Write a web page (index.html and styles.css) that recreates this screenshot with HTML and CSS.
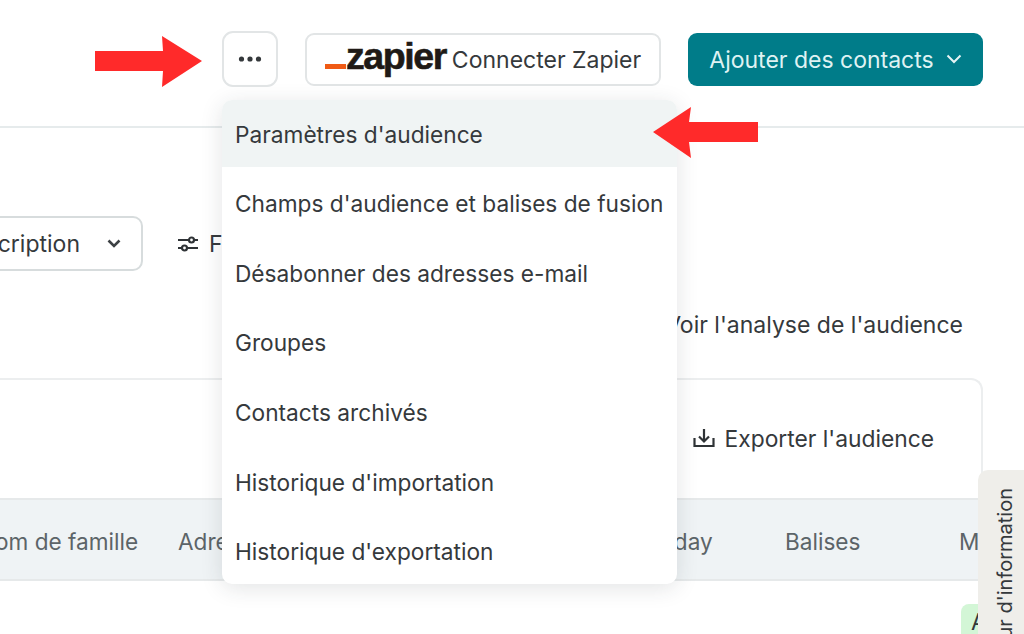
FILE: index.html
```html
<!DOCTYPE html>
<html lang="fr">
<head>
<meta charset="utf-8">
<title>Audience</title>
<link rel="stylesheet" href="styles.css">
</head>
<body>
<div class="page">
  <header class="topbar">
    <button class="btn btn-icon" aria-label="Plus">
      <svg width="24" height="6" viewBox="0 0 24 6"><circle cx="3.5" cy="3" r="2.6"/><circle cx="12" cy="3" r="2.6"/><circle cx="20.5" cy="3" r="2.6"/></svg>
    </button>
    <button class="btn btn-zapier"><span class="zap-mark"></span><span class="zap-word">zapier</span><span class="zap-label">Connecter Zapier</span></button>
    <button class="btn btn-primary"><span>Ajouter des contacts</span>
      <svg width="16" height="10" viewBox="0 0 16 10"><path d="M1.5 1.5 8 8l6.5-6.5" fill="none" stroke="#e6f4f5" stroke-width="2"/></svg>
    </button>
  </header>

  <section class="filters">
    <div class="select"><span class="select-text">Statut d'inscription</span>
      <svg class="select-chevron" width="14" height="9" viewBox="0 0 14 9"><path d="M1.5 1.5 7 7l5.5-5.5" fill="none" stroke="#3d4144" stroke-width="2.6"/></svg>
    </div>
    <div class="filter-link">
      <svg width="22" height="18" viewBox="0 0 22 18" fill="none" stroke="#2f3336" stroke-width="2.2"><path d="M1 5h11M17 5h4M1 13h4M10 13h11"/><circle cx="14.5" cy="5" r="2.5"/><circle cx="7.500" cy="13" r="2.5"/></svg>
      <span>Filtrer</span>
    </div>
  </section>

  <div class="analysis"><span>Voir l'analyse de l'audience</span></div>

  <section class="card">
    <div class="card-tools">
      <svg width="22" height="20" viewBox="0 0 22 20" fill="none" stroke="#2f3336" stroke-width="2.2"><path d="M1.500 10v8h19v-8M11 1v12M6 8.500l5 5 5-5"/></svg>
      <span>Exporter l'audience</span>
    </div>
    <div class="table-head">
      <span>Nom de famille</span>
      <span>Adresse e-mail</span>
      <span>Birthday</span>
      <span>Balises</span>
      <span>Membre</span>
    </div>
    <div class="table-row"><span class="badge">Abonné</span></div>
  </section>

  <nav class="menu">
    <a class="menu-item active">Paramètres d'audience</a>
    <a class="menu-item">Champs d'audience et balises de fusion</a>
    <a class="menu-item">Désabonner des adresses e-mail</a>
    <a class="menu-item">Groupes</a>
    <a class="menu-item">Contacts archivés</a>
    <a class="menu-item">Historique d'importation</a>
    <a class="menu-item">Historique d'exportation</a>
  </nav>

  <svg class="arrow arrow-right" width="108" height="52" viewBox="0 0 108 52"><path d="M0 15H68L67 0l40 25-40 26 1-16H0z"/></svg>
  <svg class="arrow arrow-left" width="108" height="52" viewBox="0 0 108 52"><path d="M0 25 38 0l-2 15h69v20H36l2 16z"/></svg>

  <aside class="feedback"><span>Retour d'information</span></aside>
</div>
</body>
</html>
```
FILE: styles.css
```css
* { box-sizing: border-box; }
html, body { margin: 0; padding: 0; }
body {
  background: #fff;
  color: #35393c;
  font-family: Inter, "Liberation Sans", sans-serif;
  font-size: 23px;
}
.page {
  position: relative;
  width: 1024px;
  height: 634px;
  overflow: hidden;
}
.topbar {
  display: flex;
  justify-content: flex-end;
  align-items: center;
  gap: 27px;
  height: 128px;
  padding: 0 41px 8px 0;
  border-bottom: 2px solid #e6ebec;
}
.btn {
  display: flex;
  align-items: center;
  justify-content: center;
  font: inherit;
  color: inherit;
  background: #fff;
  border: 2px solid #e2e5e6;
  border-radius: 9px;
  padding: 0;
}
.btn-icon { width: 56px; height: 56px; border-radius: 11px; }
.btn-icon circle { fill: #34383b; }
.btn-zapier { width: 356px; height: 53px; gap: 7px; }
.zap-label { margin-top: 1px; }
.zap-mark { width: 21px; height: 5px; background: #f05a14; margin-top: 14px; margin-right: -7px; }
.zap-word {
  font-family: "Liberation Sans", sans-serif;
  font-weight: 700;
  font-size: 37.500px;
  letter-spacing: -1.400px;
  color: #201a16;
  line-height: 1;
  margin-top: -5px;
  margin-right: -1px;
  -webkit-text-stroke: 0.6px #201a16;
}
.btn-primary {
  width: 295px;
  height: 53px;
  gap: 12px;
  background: #007c89;
  border: 0;
  color: #dff2f3;
}
.btn-primary span { margin-top: 1px; }
.filters {
  display: flex;
  align-items: center;
  gap: 34px;
  height: 55px;
  margin: 88px 0 0 -60px;
}
.select {
  display: flex;
  align-items: center;
  justify-content: flex-end;
  flex: none;
  gap: 27px;
  width: 203px;
  height: 55px;
  padding-right: 20px;
  border: 2px solid #d7dcdd;
  border-radius: 10px;
  overflow: hidden;
  white-space: nowrap;
}
.select-text, .select-chevron { flex: none; }
.filter-link { display: flex; align-items: center; gap: 10px; }
.analysis {
  display: flex;
  justify-content: flex-end;
  padding-right: 61px;
  margin-top: 40px;
  line-height: 28px;
}
.card {
  margin: 39px 41px 0 -22px;
  border: 2px solid #eceeef;
  border-bottom: 0;
  border-radius: 12px 12px 0 0;
}
.card-tools {
  display: flex;
  justify-content: flex-end;
  align-items: center;
  gap: 10px;
  height: 118px;
  padding: 0 47px 2px 0;
  font-size: 22.800px;
}
.table-head {
  display: grid;
  grid-template-columns: 200px 446px 161px 174px 1fr;
  align-items: center;
  height: 83px;
  margin: 0 -2px;
  padding-top: 3px;
  background: #eff3f5;
  border-top: 2px solid #e6e9ea;
  border-bottom: 2px solid #e6e9ea;
  color: #5c6468;
  font-size: 22.600px;
  white-space: nowrap;
  overflow: hidden;
}
.table-row {
  display: flex;
  justify-content: flex-end;
  height: 60px;
  padding-top: 23px;
  margin-right: -60px;
}
.badge {
  width: 80px;
  height: 40px;
  padding: 4px 10px;
  background: #d3f6d6;
  border-radius: 8px;
  overflow: hidden;
  white-space: nowrap;
}
.menu {
  position: absolute;
  left: 222px;
  top: 100px;
  width: 455px;
  height: 484px;
  display: flex;
  flex-direction: column;
  background: #fff;
  border-radius: 10px;
  overflow: hidden;
  box-shadow: 0 4px 22px rgba(40, 50, 55, 0.13);
  font-size: 22.700px;
}
.menu-item {
  display: flex;
  align-items: center;
  flex: none;
  height: 69.600px;
  padding: 4px 0 0 13px;
  white-space: nowrap;
}
.menu-item.active { background: #f0f4f4; height: 67px; padding-top: 2px; }
.arrow { position: absolute; fill: #ff2a2a; }
.arrow-right { left: 95px; top: 36px; }
.arrow-left { left: 653px; top: 107px; }
.feedback {
  position: absolute;
  left: 978px;
  top: 470px;
  width: 46px;
  height: 164px;
  padding: 18px 0 0 15px;
  background: #efeeea;
  border-radius: 10px 0 0 0;
  overflow: hidden;
  font-size: 20px;
}
.feedback span {
  display: block;
  writing-mode: vertical-rl;
  transform: rotate(180deg);
  white-space: nowrap;
  line-height: 24px;
}
```
